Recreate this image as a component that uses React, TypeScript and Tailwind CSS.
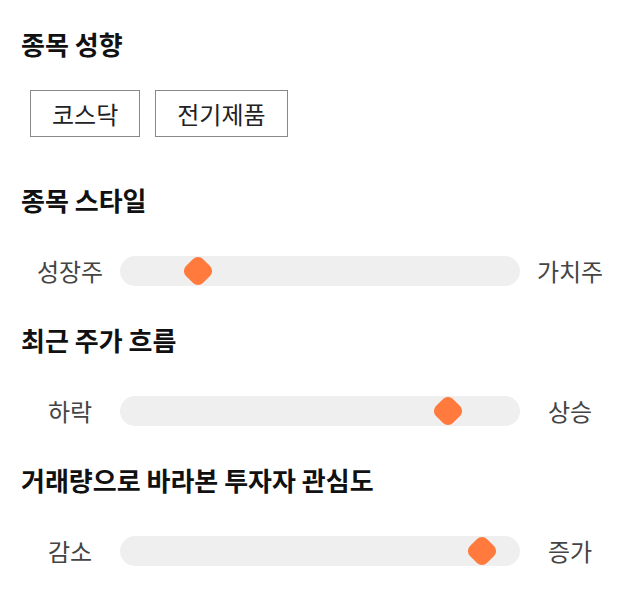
import React from "react"

const sliders = [
  { title: "종목 스타일", left: "성장주", right: "가치주", value: 0.195 },
  { title: "최근 주가 흐름", left: "하락", right: "상승", value: 0.82 },
  { title: "거래량으로 바라본 투자자 관심도", left: "감소", right: "증가", value: 0.905 },
]

const tags = ["코스닥", "전기제품"]

function Slider({ left, right, value }: { left: string; right: string; value: number }) {
  return (
    <div className="flex items-center h-[30px]">
      <div className="w-[100px] text-center text-[24px] text-[#444]">{left}</div>
      <div className="relative flex-1 h-[30px] rounded-full bg-[#efefef]">
        <div
          className="absolute top-1/2 w-6 h-6 -mt-3 -ml-3 rounded-[7px] rotate-45 bg-[#ff7a3c]"
          style={{ left: `${value * 100}%` }}
        />
      </div>
      <div className="w-[100px] text-center text-[24px] text-[#444]">{right}</div>
    </div>
  )
}

export default function App() {
  return (
    <div
      className="w-[640px] min-h-[606px] bg-white px-[20px] pt-[28px]"
      style={{ fontFamily: '"Noto Sans CJK KR", "Noto Sans", sans-serif' }}
    >
      {/* 종목 성향 */}
      <section className="mb-[47px]">
        <h2 className="pl-[1px] text-[26px] leading-8 font-bold text-[#111]">종목 성향</h2>
        <div className="flex gap-[15px] mt-[30px] pl-[10px]">
          {tags.map((tag) => (
            <span
              key={tag}
              className="h-[47px] flex items-center px-[21px] border border-[#888] text-[24px] text-[#222]"
            >
              {tag}
            </span>
          ))}
        </div>
      </section>

      {sliders.map((s) => (
        <section key={s.title} className="mb-[38px]">
          <h2 className="pl-[1px] text-[26px] leading-8 font-bold text-[#111] mb-[40px]">{s.title}</h2>
          <Slider left={s.left} right={s.right} value={s.value} />
        </section>
      ))}
    </div>
  )
}
